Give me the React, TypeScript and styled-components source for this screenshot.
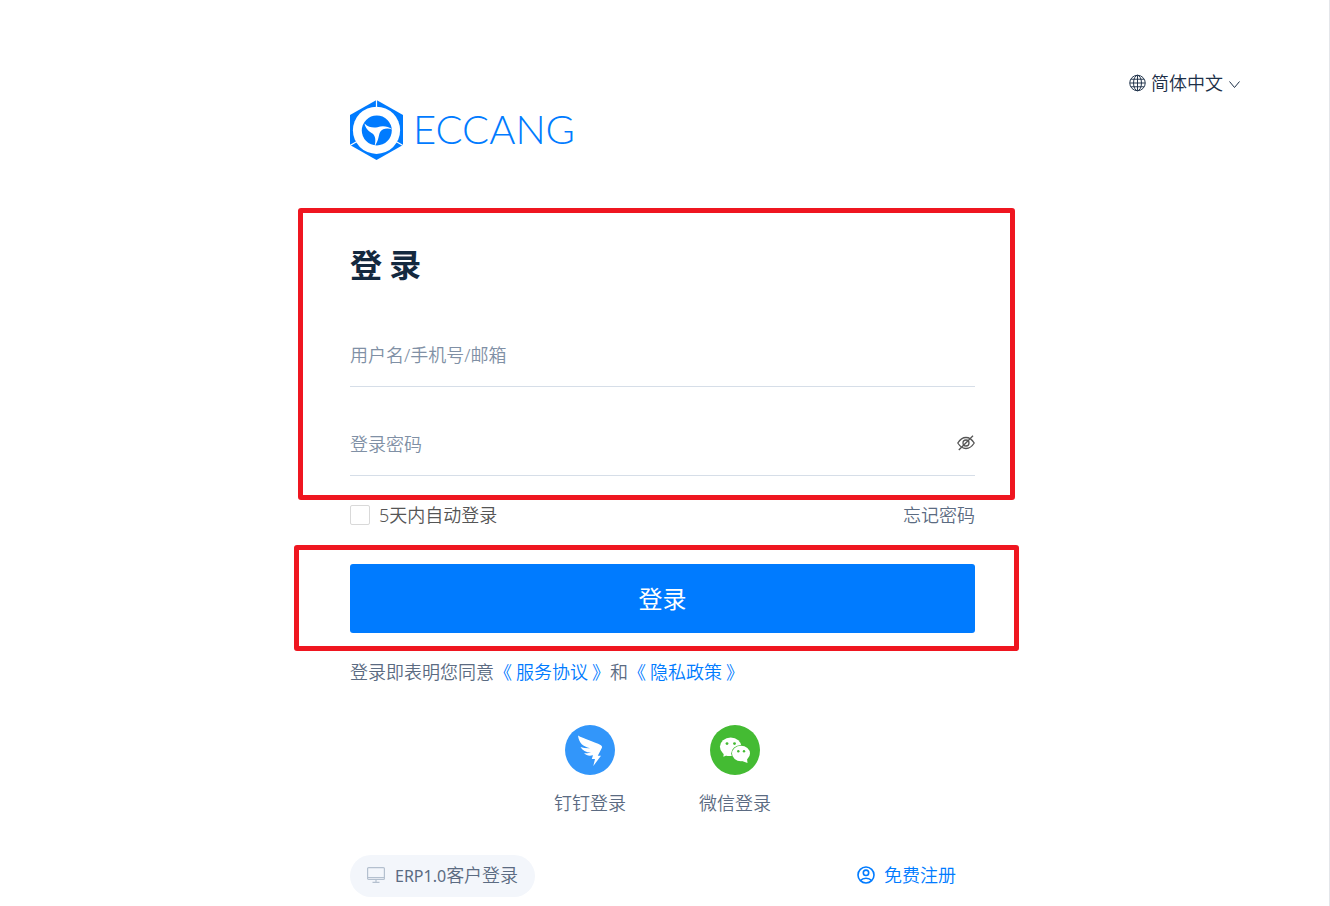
import React, { useState } from "react";
import styled, { createGlobalStyle } from "styled-components";

const blue = "#007bff";
const slate = "#5b6b82";

const GlobalStyle = createGlobalStyle`
  *, *::before, *::after { box-sizing: border-box; }
  body {
    margin: 0;
    background: #fff;
    color: ${slate};
    font-family: "Noto Sans", "Noto Sans CJK SC", sans-serif;
    font-size: 18px;
    font-weight: 350;
    line-height: 24px;
  }
  button, input, select { font: inherit; color: inherit; }
  a { color: inherit; text-decoration: none; }
`;

const Page = styled.div`
  min-height: 100vh;
  padding-right: 4px;
  border-right: 1px solid #e4e6ea;
`;

const Header = styled.header`
  display: flex;
  justify-content: flex-end;
  padding: 70px 85px 4px 0;
`;

const Language = styled.label`
  position: relative;
  display: flex;
  align-items: center;
  gap: 5px;
  color: #1c2f47;
`;

const LanguageSelect = styled.select`
  appearance: none;
  border: 0;
  margin: 0;
  padding: 0 17px 2px 0;
  height: 26px;
  background: transparent;
  font-family: "Noto Sans CJK SC", sans-serif;
  outline: none;
`;

const Chevron = styled.svg`
  position: absolute;
  right: 0;
  top: 10px;
  pointer-events: none;
`;

const Column = styled.main`
  width: 100%;
  max-width: 625px;
  margin: 0 auto;
  padding-bottom: 8px;
`;

const Brand = styled.a`
  display: flex;
  align-items: center;
  gap: 9px;
  height: 60px;
  color: ${blue};
`;

const Wordmark = styled.span`
  font-family: Lato, sans-serif;
  font-size: 40px;
  font-weight: 300;
  line-height: 58px;
  padding-bottom: 2px;
`;

const Credentials = styled.section`
  position: relative;
  display: flex;
  flex-direction: column;
  margin-top: 83px;
`;

const Title = styled.h1`
  margin: 0 0 15px;
  color: #14293f;
  font-family: "Noto Sans CJK SC", sans-serif;
  font-size: 32px;
  font-weight: 700;
  line-height: 40px;
`;

const Field = styled.div`
  display: flex;
  align-items: center;
  height: 62px;
  margin-top: 27px;
  padding-bottom: 2px;
  border-bottom: 1px solid #d6dee8;
`;

const TextInput = styled.input`
  flex: 1;
  min-width: 0;
  height: 100%;
  padding: 0;
  border: 0;
  outline: none;
  background: transparent;
  &::placeholder { color: #8090a5; opacity: 1; }
`;

const IconButton = styled.button`
  display: flex;
  padding: 0 0 2px;
  border: 0;
  background: transparent;
  color: #555;
  cursor: pointer;
`;

const Highlight = styled.div<{ $inset: string }>`
  position: absolute;
  inset: ${(p) => p.$inset};
  border: 5px solid #ef1620;
  border-radius: 3px;
  pointer-events: none;
`;

const Options = styled.div`
  display: flex;
  justify-content: space-between;
  margin-top: 27px;
`;

const Remember = styled.label`
  display: flex;
  align-items: center;
  gap: 9px;
  color: #555;
`;

const Checkbox = styled.input`
  appearance: none;
  width: 20px;
  height: 20px;
  margin: 0;
  border: 1px solid #d9d9d9;
  border-radius: 2px;
  background: #fff;
  &:checked { background: ${blue}; border-color: ${blue}; }
`;

const SubmitArea = styled.div`
  position: relative;
  margin-top: 37px;
`;

const Submit = styled.button`
  display: block;
  width: 100%;
  height: 69px;
  border: 0;
  border-radius: 3px;
  background: ${blue};
  color: #fff;
  font-size: 24px;
  font-weight: 400;
  cursor: pointer;
`;

const Agreement = styled.p`
  margin: 26px 0 0;
  font-family: "Noto Sans CJK SC", sans-serif;
  a { color: ${blue}; }
`;

const Socials = styled.nav`
  display: flex;
  justify-content: center;
  gap: 73px;
  margin-top: 42px;
`;

const Social = styled.a`
  display: flex;
  flex-direction: column;
  align-items: center;
  gap: 16px;
`;

const Footer = styled.footer`
  display: flex;
  justify-content: space-between;
  align-items: center;
  margin-top: 40px;
  padding-right: 19px;
`;

const ErpLink = styled.a`
  display: flex;
  align-items: center;
  gap: 10px;
  height: 42px;
  padding: 0 17px 2px;
  border-radius: 21px;
  background: #f3f6fb;
`;

const Latin = styled.span`
  font-size: 16px;
  font-weight: 400;
`;

const Register = styled.a`
  display: flex;
  align-items: center;
  gap: 9px;
  padding-bottom: 2px;
  color: ${blue};
`;

const LogoMark = () => (
  <svg width="54" height="60" viewBox="0 0 54 60" aria-hidden="true">
    <path d="M26.5 0L53 15V45L26.5 60L0 45V15Z" fill={blue} />
    <g stroke="#fff" strokeWidth="1.2">
      <path d="M26.5 0V8M0 45.5L7 41.5M53 45.5L46 41.5" />
    </g>
    <circle cx="26.5" cy="30.3" r="23.6" fill="#fff" />
    <circle cx="26.8" cy="30.5" r="15" fill={blue} />
    <path
      d="M14.500 23.500C18.500 27.800 24 28 27.500 27.200C32.500 25.700 37.500 26 42.500 29.500C37.500 27.700 32.700 28.300 30.300 31.800C28.300 35 29.300 40 24.500 46.500C26 40.500 25.500 36.300 22.800 33.800C18.500 31 15.500 28.500 14.500 23.500Z"
      fill="#fff"
    />
  </svg>
);

const GlobeIcon = () => (
  <svg width="17" height="18" viewBox="0 0 18 18" fill="none" stroke="currentColor" aria-hidden="true">
    <circle cx="9" cy="9" r="8.200" />
    <ellipse cx="9" cy="9" rx="4.200" ry="8.200" />
    <path d="M9 1V17M1 9H17M2.200 5H15.800M2.200 13H15.800" />
  </svg>
);

const HiddenEyeIcon = () => (
  <svg width="18" height="16" viewBox="0 0 18 16" fill="none" stroke="currentColor" strokeWidth="1.300" aria-hidden="true">
    <path d="M.800 8C3 4.500 5.800 2.500 9 2.500S15 4.500 17.200 8C15 11.500 12.200 13.500 9 13.500S3 11.500 .800 8Z" />
    <circle cx="9" cy="8" r="3" />
    <path d="M1.800 15L16 .800" />
  </svg>
);

const DingTalkIcon = () => (
  <svg width="50" height="50" viewBox="0 0 50 50" aria-hidden="true">
    <circle cx="25" cy="25" r="25" fill="#3296fa" />
    <path
      d="M13 10.500C18 13.500 30 17 35.500 20C37 20.800 37.300 21.800 36.800 23L32.800 30.800H36L28.300 41L30 34H26.800L28 30.300C24 31.200 21.500 30.500 19 28.300C22 28.500 24.500 28.200 26 27.600C21 27.500 17.300 25.500 15.500 22C18.500 23 22 23.400 25 23.200C18 21.300 14 18.500 13 10.500Z"
      fill="#fff"
    />
  </svg>
);

const WeChatIcon = () => (
  <svg width="50" height="50" viewBox="0 0 50 50" aria-hidden="true">
    <circle cx="25" cy="25" r="25" fill="#44bb33" />
    <path d="M14 27L13.300 31.800L19 29.500Z" fill="#fff" />
    <ellipse cx="20.700" cy="21.800" rx="10.800" ry="9.300" fill="#fff" />
    <ellipse cx="31" cy="28.500" rx="9.800" ry="8.600" fill="#44bb33" />
    <path d="M32 36L37.500 38L37 33.500Z" fill="#fff" />
    <ellipse cx="31" cy="28.500" rx="9" ry="7.800" fill="#fff" />
    <g fill="#44bb33">
      <circle cx="17" cy="18.600" r="1.400" />
      <circle cx="24.500" cy="18.600" r="1.400" />
      <circle cx="28.300" cy="26.300" r="1.200" />
      <circle cx="34" cy="26.300" r="1.200" />
    </g>
  </svg>
);

const MonitorIcon = () => (
  <svg width="18" height="16" viewBox="0 0 18 16" fill="none" stroke="#b4c0cf" strokeWidth="1.200" aria-hidden="true">
    <rect x=".600" y=".600" width="16.800" height="11.800" rx="1" />
    <path d="M1 10.500H17M9 12.500V15M5.500 15.300H12.500" />
  </svg>
);

const AccountIcon = () => (
  <svg width="18" height="18" viewBox="0 0 18 18" fill="none" stroke="currentColor" strokeWidth="1.600" aria-hidden="true">
    <circle cx="9" cy="9" r="8" />
    <circle cx="9" cy="6.800" r="2.700" />
    <path d="M3.500 14.500C6 11.500 12 11.500 14.500 14.500" />
  </svg>
);

export default function App() {
  const [visible, setVisible] = useState(false);
  return (
    <>
      <GlobalStyle />
      <Page>
        <Header>
          <Language>
            <GlobeIcon />
            <LanguageSelect aria-label="语言">
              <option>简体中文</option>
            </LanguageSelect>
            <Chevron width="11" height="9" viewBox="0 0 11 9" fill="none" stroke="currentColor">
              <path d="M.500 1.500L5.500 7.500L10.500 1.500" />
            </Chevron>
          </Language>
        </Header>
        <Column>
          <Brand href="#">
            <LogoMark />
            <Wordmark>ECCANG</Wordmark>
          </Brand>
          <form onSubmit={(e) => e.preventDefault()}>
            <Credentials>
              <Title>登 录</Title>
              <Field>
                <TextInput type="text" aria-label="用户名/手机号/邮箱" placeholder="用户名/手机号/邮箱" />
              </Field>
              <Field>
                <TextInput type={visible ? "text" : "password"} aria-label="登录密码" placeholder="登录密码" />
                <IconButton type="button" aria-label="显示密码" onClick={() => setVisible(!visible)}>
                  <HiddenEyeIcon />
                </IconButton>
              </Field>
              <Highlight $inset="-35px -40px -24px -52px" />
            </Credentials>
            <Options>
              <Remember>
                <Checkbox type="checkbox" />
                <span>5天内自动登录</span>
              </Remember>
              <a href="#">忘记密码</a>
            </Options>
            <SubmitArea>
              <Submit type="submit">登录</Submit>
              <Highlight $inset="-19px -44px -18px -56px" />
            </SubmitArea>
          </form>
          <Agreement>
            登录即表明您同意<a href="#">《 服务协议 》</a>和<a href="#">《 隐私政策 》</a>
          </Agreement>
          <Socials>
            <Social href="#">
              <DingTalkIcon />
              <span>钉钉登录</span>
            </Social>
            <Social href="#">
              <WeChatIcon />
              <span>微信登录</span>
            </Social>
          </Socials>
          <Footer>
            <ErpLink href="#">
              <MonitorIcon />
              <span><Latin>ERP1.0</Latin>客户登录</span>
            </ErpLink>
            <Register href="#">
              <AccountIcon />
              <span>免费注册</span>
            </Register>
          </Footer>
        </Column>
      </Page>
    </>
  );
}
